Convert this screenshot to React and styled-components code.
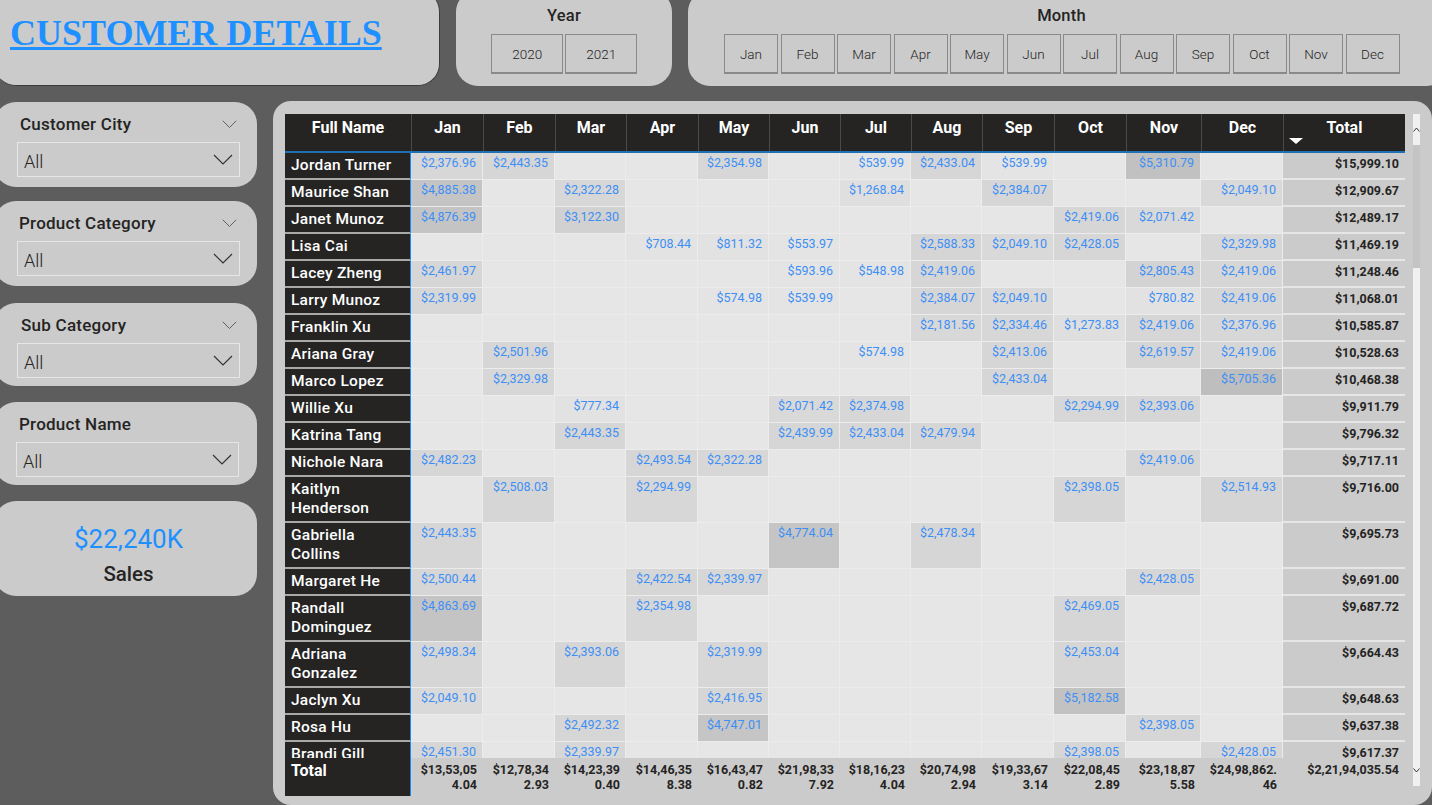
import styled, { createGlobalStyle } from "styled-components";

//Data
const MONTHS = ["Jan", "Feb", "Mar", "Apr", "May", "Jun", "Jul", "Aug", "Sep", "Oct", "Nov", "Dec"];

const CUSTOMERS = [
  { name: "Jordan Turner", total: "$15,999.10", v: { Jan: 2376.96, Feb: 2443.35, May: 2354.98, Jul: 539.99, Aug: 2433.04, Sep: 539.99, Nov: 5310.79 } },
  { name: "Maurice Shan", total: "$12,909.67", v: { Jan: 4885.38, Mar: 2322.28, Jul: 1268.84, Sep: 2384.07, Dec: 2049.1 } },
  { name: "Janet Munoz", total: "$12,489.17", v: { Jan: 4876.39, Mar: 3122.3, Oct: 2419.06, Nov: 2071.42 } },
  { name: "Lisa Cai", total: "$11,469.19", v: { Apr: 708.44, May: 811.32, Jun: 553.97, Aug: 2588.33, Sep: 2049.1, Oct: 2428.05, Dec: 2329.98 } },
  { name: "Lacey Zheng", total: "$11,248.46", v: { Jan: 2461.97, Jun: 593.96, Jul: 548.98, Aug: 2419.06, Nov: 2805.43, Dec: 2419.06 } },
  { name: "Larry Munoz", total: "$11,068.01", v: { Jan: 2319.99, May: 574.98, Jun: 539.99, Aug: 2384.07, Sep: 2049.1, Nov: 780.82, Dec: 2419.06 } },
  { name: "Franklin Xu", total: "$10,585.87", v: { Aug: 2181.56, Sep: 2334.46, Oct: 1273.83, Nov: 2419.06, Dec: 2376.96 } },
  { name: "Ariana Gray", total: "$10,528.63", v: { Feb: 2501.96, Jul: 574.98, Sep: 2413.06, Nov: 2619.57, Dec: 2419.06 } },
  { name: "Marco Lopez", total: "$10,468.38", v: { Feb: 2329.98, Sep: 2433.04, Dec: 5705.36 } },
  { name: "Willie Xu", total: "$9,911.79", v: { Mar: 777.34, Jun: 2071.42, Jul: 2374.98, Oct: 2294.99, Nov: 2393.06 } },
  { name: "Katrina Tang", total: "$9,796.32", v: { Mar: 2443.35, Jun: 2439.99, Jul: 2433.04, Aug: 2479.94 } },
  { name: "Nichole Nara", total: "$9,717.11", v: { Jan: 2482.23, Apr: 2493.54, May: 2322.28, Nov: 2419.06 } },
  { name: "Kaitlyn Henderson", tall: true, total: "$9,716.00", v: { Feb: 2508.03, Apr: 2294.99, Oct: 2398.05, Dec: 2514.93 } },
  { name: "Gabriella Collins", tall: true, total: "$9,695.73", v: { Jan: 2443.35, Jun: 4774.04, Aug: 2478.34 } },
  { name: "Margaret He", total: "$9,691.00", v: { Jan: 2500.44, Apr: 2422.54, May: 2339.97, Nov: 2428.05 } },
  { name: "Randall Dominguez", tall: true, total: "$9,687.72", v: { Jan: 4863.69, Apr: 2354.98, Oct: 2469.05 } },
  { name: "Adriana Gonzalez", tall: true, total: "$9,664.43", v: { Jan: 2498.34, Mar: 2393.06, May: 2319.99, Oct: 2453.04 } },
  { name: "Jaclyn Xu", total: "$9,648.63", v: { Jan: 2049.1, May: 2416.95, Oct: 5182.58 } },
  { name: "Rosa Hu", total: "$9,637.38", v: { Mar: 2492.32, May: 4747.01, Nov: 2398.05 } },
  { name: "Brandi Gill", total: "$9,617.37", v: { Jan: 2451.3, Mar: 2339.97, Oct: 2398.05, Dec: 2428.05 } },
];

const MONTH_TOTALS = [
  "$13,53,05\n4.04", "$12,78,34\n2.93", "$14,23,39\n0.40", "$14,46,35\n8.38",
  "$16,43,47\n0.82", "$21,98,33\n7.92", "$18,16,23\n4.04", "$20,74,98\n2.94",
  "$19,33,67\n3.14", "$22,08,45\n2.89", "$23,18,87\n5.58", "$24,98,862.\n46",
];

const SLICERS = [
  { title: "Customer City", height: 85, top: 1, left: 20, boxLeft: 17, caret: true },
  { title: "Product Category", height: 85, top: 14, left: 19, boxLeft: 17, caret: true },
  { title: "Sub Category", height: 83, top: 17, left: 21, boxLeft: 17, caret: true },
  { title: "Product Name", height: 83, top: 16, left: 19, boxLeft: 16, caret: false },
];

const money = (n) => "$" + n.toLocaleString("en-US", { minimumFractionDigits: 2, maximumFractionDigits: 2 });

//Conditional shading, darker as the value grows
const shade = (n) => {
  if (!n) return "#e6e6e6";
  const g = Math.round(232 - (n / 5705) * 42);
  return `rgb(${g}, ${g}, ${g})`;
};

const Chevron = ({ size = 16, color = "#444" }) => (
  <svg width={size} height={size * 0.55} viewBox="0 0 20 11" fill="none">
    <path d="M1 1 L10 10 L19 1" stroke={color} strokeWidth="1.2" />
  </svg>
);

const App = () => {
  return (
    <>
      <GlobalStyle />
      <Page>
        <TopBar>
          <TitleCard>
            <Title href="#">CUSTOMER DETAILS</Title>
          </TitleCard>
          <YearCard>
            <PanelTitle>Year</PanelTitle>
            <ButtonRow>
              <YearButton>2020</YearButton>
              <YearButton>2021</YearButton>
            </ButtonRow>
          </YearCard>
          <MonthCard>
            <PanelTitle>Month</PanelTitle>
            <ButtonRow>
              {MONTHS.map((m) => (
                <MonthButton key={m}>{m}</MonthButton>
              ))}
            </ButtonRow>
          </MonthCard>
        </TopBar>
        <Main>
          <Sidebar>
            {SLICERS.map((s) => (
              <SlicerCard key={s.title} $height={s.height} $top={s.top}>
                <SlicerHead $left={s.left}>
                  <span>{s.title}</span>
                  {s.caret && <Chevron size={15} color="#555" />}
                </SlicerHead>
                <Dropdown $left={s.boxLeft}>
                  <span>All</span>
                  <Chevron size={20} color="#333" />
                </Dropdown>
              </SlicerCard>
            ))}
            <SalesCard>
              <SalesValue>$22,240K</SalesValue>
              <SalesLabel>Sales</SalesLabel>
            </SalesCard>
          </Sidebar>
          <TableCard>
            <Matrix>
              <HeadRow>
                <HeadCell>Full Name</HeadCell>
                {MONTHS.map((m) => (
                  <HeadCell key={m}>{m}</HeadCell>
                ))}
                <HeadCell>
                  Total
                  <SortArrow />
                </HeadCell>
              </HeadRow>
              <Body>
                {CUSTOMERS.map((c) => (
                  <Row key={c.name} $tall={c.tall}>
                    <NameCell>{c.name}</NameCell>
                    {MONTHS.map((m) => (
                      <ValueCell key={m} $bg={shade(c.v[m])}>
                        {c.v[m] ? money(c.v[m]) : ""}
                      </ValueCell>
                    ))}
                    <TotalCell>{c.total}</TotalCell>
                  </Row>
                ))}
              </Body>
              <FootRow>
                <FootName>Total</FootName>
                {MONTH_TOTALS.map((t, i) => (
                  <FootCell key={i}>{t}</FootCell>
                ))}
                <FootCell>$2,21,94,035.54</FootCell>
              </FootRow>
            </Matrix>
            <Scrollbar>
              <ScrollButton>
                <svg width="7" height="5" viewBox="0 0 7 5" fill="none">
                  <path d="M0.5 4.5 L3.5 1 L6.5 4.5" stroke="#333" />
                </svg>
              </ScrollButton>
              <ScrollTrack />
              <ScrollThumb />
              <ScrollButton>
                <svg width="7" height="5" viewBox="0 0 7 5" fill="none">
                  <path d="M0.5 0.5 L3.5 4 L6.5 0.5" stroke="#333" />
                </svg>
              </ScrollButton>
            </Scrollbar>
          </TableCard>
        </Main>
      </Page>
    </>
  );
};

const COLUMNS = "126px 72px 72px 71px 72px 71px 71px 71px 71px 72px 72px 75px 82px 122px";
const FONT = `"Roboto", "Liberation Sans", sans-serif`;

const GlobalStyle = createGlobalStyle`
  html, body {
    margin: 0;
    padding: 0;
    background: #5d5d5d;
  }
  * {
    box-sizing: border-box;
  }
`;

const Page = styled.div`
  width: 1432px;
  height: 805px;
  overflow: hidden;
  background: #5d5d5d;
  font-family: ${FONT};
  display: flex;
  flex-direction: column;
`;

const TopBar = styled.div`
  display: flex;
  gap: 16px;
  height: 86px;
  margin-left: -6px;
  flex: none;
`;

const Card = styled.div`
  background: #cbcbcb;
  border-radius: 22px;
`;

const TitleCard = styled(Card)`
  width: 446px;
  flex: none;
  margin-top: -10px;
  padding: 24px 0 0 16px;
  border: 1px solid #3c3c3c;
  border-top: none;
  border-left: none;
`;

const Title = styled.a`
  font-family: "Liberation Serif", serif;
  font-weight: 700;
  font-size: 36px;
  line-height: 38px;
  color: #1e90ff;
`;

const YearCard = styled(Card)`
  width: 216px;
  flex: none;
  margin-top: -10px;
  padding-top: 16px;
  display: flex;
  flex-direction: column;
  align-items: center;
`;

const MonthCard = styled(Card)`
  width: 760px;
  flex: none;
  margin-top: -10px;
  padding: 16px 0 0 36px;
  display: flex;
  flex-direction: column;
  align-items: flex-start;
`;

const PanelTitle = styled.div`
  font-size: 16.5px;
  font-weight: 500;
  line-height: 20px;
  letter-spacing: 0.2px;
  color: #252423;
  width: 100%;
  text-align: center;
  ${MonthCard} & {
    width: 675px;
  }
`;

const ButtonRow = styled.div`
  display: flex;
  gap: 2.5px;
  margin-top: 8px;
`;

const Toggle = styled.div`
  height: 40px;
  border: 1px solid #8a8a8a;
  border-bottom-width: 2px;
  display: flex;
  align-items: center;
  justify-content: center;
  font-size: 13.5px;
  font-weight: 300;
  color: #252423;
`;

const YearButton = styled(Toggle)`
  width: 72px;
  margin-right: -0.5px;
`;

const MonthButton = styled(Toggle)`
  width: 54px;
`;

const Main = styled.div`
  flex: 1;
  display: flex;
  gap: 16px;
  padding-top: 15px;
  min-height: 0;
`;

const Sidebar = styled.div`
  width: 257px;
  flex: none;
  display: flex;
  flex-direction: column;
`;

const SlicerCard = styled(Card)`
  height: ${(p) => p.$height}px;
  margin: ${(p) => p.$top}px 0 0 -6px;
  padding: 11px 0 0 6px;
  display: flex;
  flex-direction: column;
`;

const SlicerHead = styled.div`
  height: 22px;
  margin-left: ${(p) => p.$left}px;
  margin-right: 20px;
  display: flex;
  align-items: center;
  justify-content: space-between;
  font-size: 17px;
  font-weight: 500;
  letter-spacing: 0.25px;
  color: #252423;
`;

const Dropdown = styled.div`
  width: 223px;
  height: 35px;
  margin-top: 7px;
  margin-left: ${(p) => p.$left}px;
  padding: 0 6px;
  border: 1px solid #e6e6e6;
  display: flex;
  align-items: center;
  justify-content: space-between;
  font-size: 18px;
  font-weight: 300;
  color: #252423;
  span {
    padding-top: 3px;
  }
`;

const SalesCard = styled(Card)`
  height: 95px;
  margin: 16px 0 0 -6px;
  padding: 20px 0 0 6px;
  display: flex;
  flex-direction: column;
  align-items: center;
`;

const SalesValue = styled.div`
  font-size: 26px;
  line-height: 36px;
  color: #1e90ff;
`;

const SalesLabel = styled.div`
  font-size: 20.5px;
  font-weight: 500;
  line-height: 26px;
  margin-top: 4px;
  color: #252423;
`;

const TableCard = styled(Card)`
  flex: 1;
  border-radius: 18px;
  padding: 13px 12px 0;
  display: flex;
  gap: 8px;
  align-items: flex-start;
`;

const Matrix = styled.div`
  width: 1120px;
  flex: none;
  display: flex;
  flex-direction: column;
`;

const HeadRow = styled.div`
  display: grid;
  grid-template-columns: ${COLUMNS};
  height: 39px;
  background: #252423;
  border-bottom: 2px solid #1f6fb5;
`;

const HeadCell = styled.div`
  position: relative;
  padding-top: 4px;
  text-align: center;
  font-size: 16px;
  font-weight: 700;
  color: #fff;
  border-left: 1px solid #4a4a4a;
  &:first-child {
    border-left: none;
  }
`;

const SortArrow = styled.span`
  position: absolute;
  left: 5px;
  top: 24px;
  border-left: 7px solid transparent;
  border-right: 7px solid transparent;
  border-top: 6px solid #fff;
`;

const Body = styled.div`
  height: 605px;
  overflow: hidden;
`;

const Row = styled.div`
  display: grid;
  grid-template-columns: ${COLUMNS};
  height: ${(p) => (p.$tall ? 46 : 27)}px;
`;

const NameCell = styled.div`
  background: #252423;
  color: #fff;
  font-size: 15.5px;
  font-weight: 500;
  letter-spacing: 0.25px;
  line-height: 19px;
  padding: 3px 4px 0 6px;
  border-bottom: 2px solid #a8a8a8;
  border-right: 1px solid #118dff;
`;

const ValueCell = styled.div`
  background: ${(p) => p.$bg};
  color: #3d8ff5;
  font-size: 12.5px;
  line-height: 16px;
  padding: 2px 6px 0 0;
  text-align: right;
  border-bottom: 1px solid #ececec;
  border-right: 1px solid #ececec;
`;

const TotalCell = styled.div`
  background: #cbcbcb;
  color: #252423;
  font-size: 12.5px;
  font-weight: 700;
  line-height: 16px;
  padding: 3px 6px 0 0;
  text-align: right;
  border-bottom: 2px solid #e6e6e6;
`;

const FootRow = styled.div`
  display: grid;
  grid-template-columns: ${COLUMNS};
  height: 38px;
`;

const FootName = styled.div`
  background: #252423;
  color: #fff;
  font-size: 16px;
  font-weight: 700;
  padding: 3px 6px 0;
  border-right: 1px solid #118dff;
`;

const FootCell = styled.div`
  color: #252423;
  font-size: 12.5px;
  font-weight: 700;
  line-height: 15px;
  padding: 4px 6px 0 0;
  text-align: right;
  white-space: pre-line;
`;

const Scrollbar = styled.div`
  width: 7px;
  height: 672px;
  flex: none;
  display: flex;
  flex-direction: column;
`;

const ScrollButton = styled.div`
  height: 31px;
  background: #f0f0f0;
  display: flex;
  align-items: center;
  justify-content: center;
  flex: none;
`;

const ScrollTrack = styled.div`
  height: 123px;
  background: #c4c4c4;
  flex: none;
`;

const ScrollThumb = styled.div`
  flex: 1;
  background: #f0f0f0;
`;

export default App;
